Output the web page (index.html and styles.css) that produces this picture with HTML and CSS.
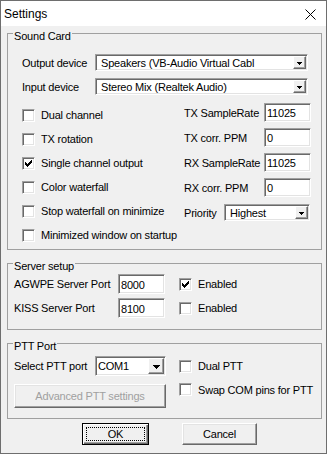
FILE: index.html
```html
<!DOCTYPE html>
<html lang="en">
<head>
  <meta charset="UTF-8" />
  <title>Settings</title>
  <link rel="stylesheet" href="styles.css">
</head>
<body>

<div class="window">
  <div class="titlebar">
    <span class="title">Settings</span>
    <svg class="close" width="11" height="11" viewBox="0 0 11 11">
      <path d="M0.5 0.5l10 10M10.5 0.5l-10 10" stroke="#000" stroke-width="1" fill="none"/>
    </svg>
  </div>

  <div class="client">

    <!-- Sound card -->
    <fieldset class="group sound">
      <legend>Sound Card</legend>

      <div class="device">
        <span>Output device</span>
        <div class="combo">
          <span class="value">Speakers (VB-Audio Virtual Cabl</span>
          <span class="drop"><svg width="5" height="3"><path d="M0 0h5v1H0zM1 1h3v1H1zM2 2h1v1H2z"/></svg></span>
        </div>
      </div>
      <div class="device">
        <span>Input device</span>
        <div class="combo">
          <span class="value">Stereo Mix (Realtek Audio)</span>
          <span class="drop"><svg width="5" height="3"><path d="M0 0h5v1H0zM1 1h3v1H1zM2 2h1v1H2z"/></svg></span>
        </div>
      </div>

      <div class="options">
        <div class="checks">
          <div class="check"><span class="box"></span>Dual channel</div>
          <div class="check"><span class="box"></span>TX rotation</div>
          <div class="check"><span class="box"><svg width="9" height="9"><path d="M1 3v3h1V3zM2 4v3h1V4zM3 5v3h1V5zM4 4v3h1V4zM5 3v3h1V3zM6 2v3h1V2zM7 1v3h1V1z"/></svg></span>Single channel output</div>
          <div class="check"><span class="box"></span>Color waterfall</div>
          <div class="check"><span class="box"></span>Stop waterfall on minimize</div>
          <div class="check"><span class="box"></span>Minimized window on startup</div>
        </div>

        <div class="fields">
          <div class="field"><span>TX SampleRate</span><div class="edit">11025</div></div>
          <div class="field"><span>TX corr. PPM</span><div class="edit">0</div></div>
          <div class="field"><span>RX SampleRate</span><div class="edit">11025</div></div>
          <div class="field"><span>RX corr. PPM</span><div class="edit">0</div></div>
          <div class="field">
            <span>Priority</span>
            <div class="combo priority">
              <span class="value">Highest</span>
              <span class="drop"><svg width="5" height="3"><path d="M0 0h5v1H0zM1 1h3v1H1zM2 2h1v1H2z"/></svg></span>
            </div>
          </div>
        </div>
      </div>
    </fieldset>

    <!-- Server -->
    <fieldset class="group server">
      <legend>Server setup</legend>
      <div class="port-row">
        <span>AGWPE Server Port</span>
        <div class="edit">8000</div>
        <div class="check"><span class="box"><svg width="9" height="9"><path d="M1 3v3h1V3zM2 4v3h1V4zM3 5v3h1V5zM4 4v3h1V4zM5 3v3h1V3zM6 2v3h1V2zM7 1v3h1V1z"/></svg></span>Enabled</div>
      </div>
      <div class="port-row">
        <span>KISS Server Port</span>
        <div class="edit">8100</div>
        <div class="check"><span class="box"></span>Enabled</div>
      </div>
    </fieldset>

    <!-- PTT -->
    <fieldset class="group ptt">
      <legend>PTT Port</legend>
      <div class="ptt-grid">
        <div class="select-row">
          <span>Select PTT port</span>
          <div class="combo com">
            <span class="value">COM1</span>
            <span class="drop"><svg width="7" height="4"><path d="M0 0h7v1H0zM1 1h5v1H1zM2 2h3v1H2zM3 3h1v1H3z"/></svg></span>
          </div>
        </div>
        <div class="check"><span class="box"></span>Dual PTT</div>
        <div class="btn disabled">Advanced PTT settings</div>
        <div class="check top"><span class="box"></span>Swap COM pins for PTT</div>
      </div>
    </fieldset>

    <div class="actions">
      <div class="btn default">OK</div>
      <div class="btn cancel">Cancel</div>
    </div>

  </div>
</div>

</body>
</html>
```

FILE: styles.css
```css
* {
  box-sizing: border-box;
}

body {
  margin: 0;
  font-family: "Liberation Sans", Arial, sans-serif;
  font-size: 11px;
  letter-spacing: -0.2px;
  color: #000;
  background: #fff;
}

.window {
  width: 327px;
  height: 454px;
  border: 1px solid #6e6e6e;
  display: flex;
  flex-direction: column;
  background: #f0f0f0;
}

/* title bar */
.titlebar {
  height: 25px;
  flex-shrink: 0;
  background: #fff;
  display: flex;
  align-items: center;
  justify-content: space-between;
  padding: 0 10px 0 3px;
}

.titlebar .title {
  font-size: 12px;
  letter-spacing: 0;
}

.titlebar .close {
  margin-top: 2px;
}

.client {
  flex: 1;
  padding: 4px 4px 0 6px;
}

/* group boxes */
.group {
  margin: 0;
  min-width: 0;
  padding: 0 10px 0 6px;
  border: 1px solid #a0a0a0;
}

.group + .group {
  margin-top: 10px;
}

.group legend {
  height: 7px;
  line-height: 13px;
  padding: 0 1px;
  margin-left: -1px;
}

.sound {
  padding: 17px 10px 2px 14px;
}

.sound legend {
  margin-left: -9px;
}

.server {
  padding-top: 7px;
  padding-bottom: 11px;
}

.ptt {
  padding-top: 9px;
  padding-bottom: 10px;
}

/* sunken controls */
.edit,
.combo,
.box {
  background: #fff;
  border: 1px solid;
  border-color: #a0a0a0 #fff #fff #a0a0a0;
  box-shadow: inset 1px 1px 0 #696969, inset -1px -1px 0 #e3e3e3;
}

.edit {
  width: 47px;
  height: 19px;
  padding: 2px 2px 0;
  line-height: 14px;
}

.combo {
  height: 17px;
  padding: 1px;
  display: flex;
  align-items: stretch;
}

.combo .value {
  flex: 1;
  padding-left: 4px;
  line-height: 14px;
  white-space: nowrap;
  overflow: hidden;
}

.combo .drop {
  width: 13px;
  display: flex;
  align-items: center;
  justify-content: center;
  padding-top: 1px;
  background: #f0f0f0;
  border: 1px solid;
  border-color: #fff #696969 #696969 #fff;
  box-shadow: inset -1px -1px 0 #a0a0a0;
}

.box {
  width: 13px;
  height: 13px;
  flex-shrink: 0;
  padding: 1px;
  display: flex;
}

.check {
  display: flex;
  align-items: center;
  gap: 6px;
  white-space: nowrap;
}

/* sound card */
.device {
  display: grid;
  grid-template-columns: 73px 213px;
  align-items: center;
  height: 17px;
}

.device + .device {
  margin-top: 7px;
}

.options {
  display: flex;
  justify-content: space-between;
  margin-top: 8px;
}

.checks .check {
  height: 24px;
}

.fields {
  width: 127px;
  display: flex;
  flex-direction: column;
  gap: 6px;
}

.field {
  height: 19px;
  display: flex;
  align-items: center;
  justify-content: space-between;
}

.combo.priority {
  width: 86px;
  margin-right: 1px;
}

/* server setup */
.port-row {
  display: grid;
  grid-template-columns: 104px 61px auto;
  align-items: center;
  height: 20px;
}

.port-row .edit {
  height: 20px;
  padding-top: 3px;
}

.port-row + .port-row {
  margin-top: 4px;
}

/* ptt */
.ptt-grid {
  display: grid;
  grid-template-columns: 152px auto;
  column-gap: 13px;
  row-gap: 8px;
  align-items: center;
}

.select-row {
  height: 20px;
  display: flex;
  align-items: center;
  justify-content: space-between;
}

.combo.com {
  width: 71px;
  height: 20px;
}

.combo.com .value {
  padding-left: 1px;
  line-height: 16px;
}

.combo.com .drop {
  width: 16px;
}

.check.top {
  align-self: start;
  margin-top: -1px;
}

/* buttons */
.btn {
  height: 22px;
  display: flex;
  align-items: center;
  justify-content: center;
  background: #f0f0f0;
  border: 1px solid;
  border-color: #fff #696969 #696969 #fff;
  box-shadow: inset -1px -1px 0 #a0a0a0, inset 1px 1px 0 #e3e3e3;
}

.btn.disabled {
  height: 24px;
  color: #a0a0a0;
}

.actions {
  display: flex;
  gap: 33px;
  padding-left: 75px;
  margin-top: 4px;
}

.btn.default {
  width: 67px;
  border: 1px solid #000;
  box-shadow: inset 1px 1px 0 #fff, inset -1px -1px 0 #696969, inset -2px -2px 0 #a0a0a0;
  outline: 1px dotted #000;
  outline-offset: -5px;
}

.btn.cancel {
  width: 75px;
}
```
